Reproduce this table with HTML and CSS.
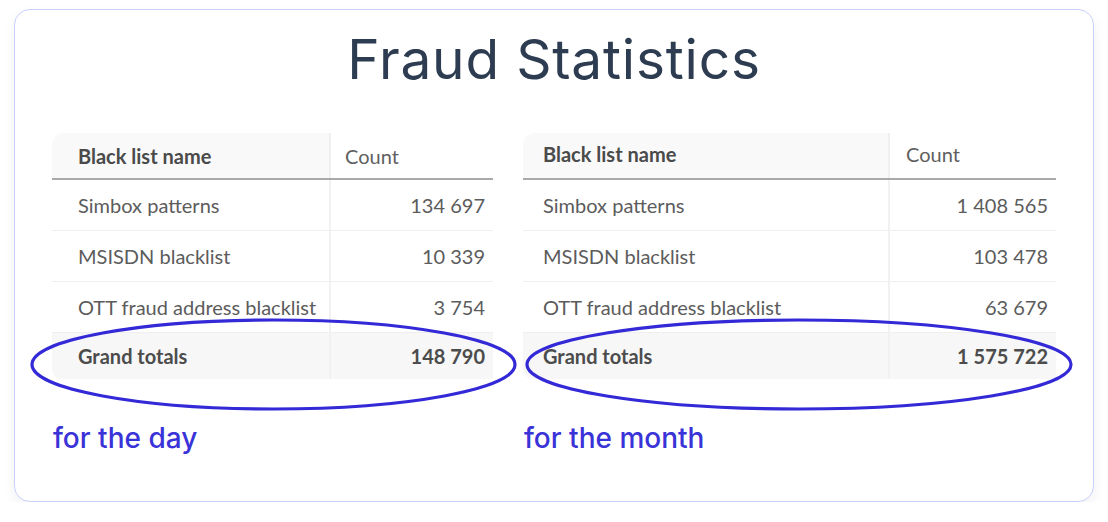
FILE: index.html
```html
<!DOCTYPE html>
<html lang="en">
<head>
<meta charset="utf-8">
<title>Fraud Statistics</title>
<link rel="stylesheet" href="styles.css">
</head>
<body>
<div class="card">
  <h1 class="title">Fraud Statistics</h1>
  <div class="panels">
    <div class="panel panel-day">
      <div class="table-wrap">
        <table class="stats">
          <colgroup><col class="c-name-day"><col class="c-count-day"></colgroup>
          <thead>
            <tr><th class="name">Black list name</th><th class="count-h">Count</th></tr>
          </thead>
          <tbody>
            <tr><td class="name">Simbox patterns</td><td class="num">134 697</td></tr>
            <tr><td class="name">MSISDN blacklist</td><td class="num">10 339</td></tr>
            <tr><td class="name">OTT fraud address blacklist</td><td class="num">3 754</td></tr>
            <tr class="total"><td class="name">Grand totals</td><td class="num">148 790</td></tr>
          </tbody>
        </table>
        <svg class="ring ring-day" width="489" height="95" viewBox="0 0 489 95"><ellipse cx="244.5" cy="47.5" rx="241.5" ry="44.5" fill="none" stroke="#3329d6" stroke-width="3.2"/></svg>
      </div>
      <p class="caption">for the day</p>
    </div>
    <div class="panel panel-month">
      <div class="table-wrap">
        <table class="stats stats-month">
          <colgroup><col class="c-name-month"><col class="c-count-month"></colgroup>
          <thead>
            <tr><th class="name">Black list name</th><th class="count-h">Count</th></tr>
          </thead>
          <tbody>
            <tr><td class="name">Simbox patterns</td><td class="num">1 408 565</td></tr>
            <tr><td class="name">MSISDN blacklist</td><td class="num">103 478</td></tr>
            <tr><td class="name">OTT fraud address blacklist</td><td class="num">63 679</td></tr>
            <tr class="total"><td class="name">Grand totals</td><td class="num">1 575 722</td></tr>
          </tbody>
        </table>
        <svg class="ring ring-month" width="550" height="95" viewBox="0 0 550 95"><ellipse cx="275" cy="47.5" rx="272" ry="44.5" fill="none" stroke="#3329d6" stroke-width="3.2"/></svg>
      </div>
      <p class="caption">for the month</p>
    </div>
  </div>
</div>
</body>
</html>
```

FILE: styles.css
```css
* { box-sizing: border-box; }
html, body { margin: 0; background: #ffffff; }
body { padding: 9px 14px 0 14px; }

.card {
  width: 1080px;
  height: 493px;
  border: 1px solid #c9d1fb;
  border-radius: 16px;
  background: #ffffff;
  box-shadow: 0 6px 14px rgba(30, 40, 80, 0.06);
  padding: 20px 37px 0 37px;
}

.title {
  margin: 0;
  text-align: center;
  font-family: "Inter", "Open Sans", sans-serif;
  font-weight: 400;
  font-size: 55px;
  line-height: 58px;
  color: #2d3c51;
  letter-spacing: 0.8px;
}

.panels {
  display: flex;
  gap: 30px;
  margin-top: 45px;
}

.panel-day { width: 441px; }
.panel-month { width: 533px; }

.table-wrap { position: relative; }

.stats {
  width: 100%;
  border-collapse: collapse;
  table-layout: fixed;
  font-family: "Lato", "Liberation Sans", sans-serif;
  font-size: 20px;
  color: #5c5c5c;
}

.c-name-day { width: 278px; }
.c-count-day { width: 163px; }
.c-name-month { width: 366px; }
.c-count-month { width: 167px; }

.stats th {
  height: 46px;
  background: #f9f9f9;
  border-bottom: 2px solid #a9a9a9;
  text-align: left;
  padding: 0;
}
.stats th.name {
  font-weight: 700;
  color: #4a4a4a;
  padding-left: 26px;
  border-top-left-radius: 12px;
  border-right: 2px solid #efefef;
}
.stats th.count-h {
  font-weight: 400;
  color: #606060;
  padding-left: 14px;
  background: #ffffff;
}

.stats td {
  height: 51px;
  padding: 0;
  border-bottom: 1px solid #efefef;
}
.stats td.name {
  padding-left: 26px;
  border-right: 2px solid #f1f1f1;
  white-space: nowrap;
}
.stats td.num {
  text-align: right;
  padding-right: 8px;
}

.stats-month th.name,
.stats-month td.name { padding-left: 20px; }
.stats-month th.name { padding-bottom: 4px; }
.stats-month th.count-h { padding-left: 16px; padding-bottom: 4px; }

.stats tr.total td {
  height: 47px;
  background: #f7f7f7;
  font-weight: 700;
  color: #4c4c4c;
  border-bottom: none;
}
.stats tr.total td.name { border-bottom-left-radius: 10px; }

.ring {
  position: absolute;
  pointer-events: none;
}
.ring-day { left: -23px; top: 184px; }
.ring-month { left: 1px; top: 184px; }

.caption {
  margin: 42px 0 0 1px;
  font-family: "Inter", "Open Sans", sans-serif;
  font-size: 28px;
  line-height: 34px;
  font-weight: 500;
  color: #3a33d8;
}
```
